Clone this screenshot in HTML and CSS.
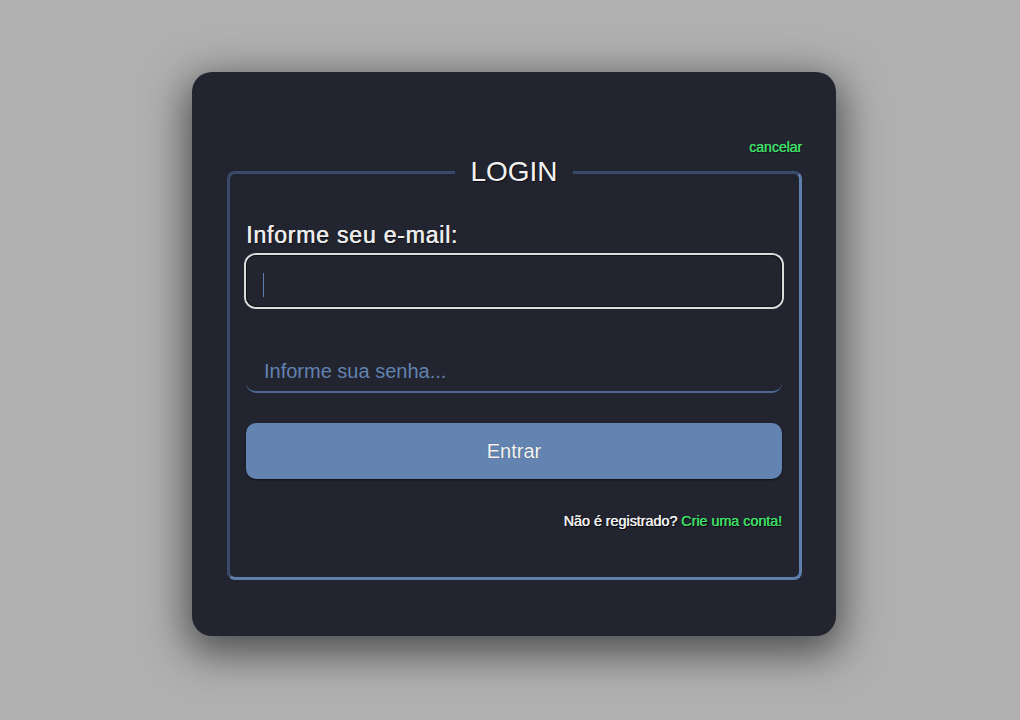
FILE: index.html
```html
<!DOCTYPE html>
<html lang="pt-BR">
<head>
<meta charset="utf-8">
<title>Login</title>
<link rel="stylesheet" href="styles.css">
</head>
<body>
<div class="stage">
  <div class="card">
    <div class="top-row"><a class="cancel" href="#">cancelar</a></div>
    <fieldset class="box">
      <legend class="legend">LOGIN</legend>
      <label class="label" for="email">Informe seu e-mail:</label>
      <div class="field field-focus">
        <input class="input" id="email" type="email">
        <span class="caret"></span>
      </div>
      <div class="field field-line">
        <input class="input" type="password" placeholder="Informe sua senha...">
      </div>
      <button class="btn" type="button">Entrar</button>
      <p class="footer">Não é registrado? <a class="create" href="#">Crie uma conta!</a></p>
    </fieldset>
  </div>
</div>
</body>
</html>
```

FILE: styles.css
```css
html, body {
  margin: 0;
  padding: 0;
  background: #b0b0b0;
  font-family: "Liberation Sans", Arial, sans-serif;
}

.stage {
  width: 1020px;
  height: 720px;
  padding: 72px 0 0 192px;
  box-sizing: border-box;
}

.card {
  width: 644px;
  height: 564px;
  box-sizing: border-box;
  background: #222430;
  border-radius: 20px;
  padding: 67px 34px 0 35px;
  box-shadow: 0 12px 40px 6px rgba(0, 0, 0, 0.55);
}

.top-row {
  display: flex;
  justify-content: flex-end;
  height: 16px;
  line-height: 16px;
}

.cancel {
  color: #3edd66;
  font-size: 14px;
  text-decoration: none;
  text-shadow: 0.5px 0 0 #3edd66, 1px 1px 1px rgba(0, 0, 0, 0.6);
}

.box {
  margin: 1px 0 0 0;
  padding: 0 17px 48px 16px;
  border: 3px solid;
  border-color: #3a4b69 #5e7eac #5e7eac #3a4b69;
  border-radius: 8px;
  display: flex;
  flex-direction: column;
  min-width: 0;
}

.legend {
  margin: 0 auto;
  padding: 0 15px;
  font-size: 28px;
  line-height: 32px;
  color: #f2f2f2;
  text-shadow: 1px 1px 1px rgba(0, 0, 0, 0.7);
}

.label {
  margin-top: 34px;
  font-size: 23px;
  letter-spacing: 0.8px;
  line-height: 26px;
  color: #ececec;
  text-shadow: 0.5px 0 0 #ececec, 1px 1px 1px rgba(0, 0, 0, 0.6);
}

.field {
  position: relative;
  height: 52px;
  border-radius: 10px;
  box-sizing: border-box;
}

.field-focus {
  margin-top: 7px;
  box-shadow: 0 0 0 2px #dcdcdc, inset 0 0 0 1px #12131a;
}

.field-line {
  margin-top: 34px;
  border-bottom: 2px solid #4b6894;
}

.input {
  width: 100%;
  height: 100%;
  box-sizing: border-box;
  border: 0;
  outline: 0;
  background: transparent;
  padding: 0 18px;
  font-family: "Liberation Sans", Arial, sans-serif;
  font-size: 20px;
  color: #e8e8e8;
}

.field-line .input {
  padding-top: 10px;
}

.input::placeholder {
  color: #6282b0;
  opacity: 1;
}

.caret {
  position: absolute;
  left: 17px;
  top: 18px;
  width: 1px;
  height: 24px;
  background: #5d7cab;
}

.btn {
  margin-top: 30px;
  height: 56px;
  border: 0;
  border-radius: 10px;
  background: #6383b0;
  color: #f4f4f4;
  font-family: "Liberation Sans", Arial, sans-serif;
  font-size: 20px;
  box-shadow: 0 1px 2px rgba(0, 0, 0, 0.6);
  text-shadow: 0 0 1px rgba(0, 0, 0, 0.4);
}

.footer {
  margin: 34px 0 0 0;
  text-align: right;
  font-size: 14.3px;
  line-height: 16px;
  color: #f0f0f0;
  text-shadow: 0.5px 0 0 currentColor, 1px 1px 1px #000;
}

.create {
  color: #3edd66;
  text-decoration: none;
}
```
